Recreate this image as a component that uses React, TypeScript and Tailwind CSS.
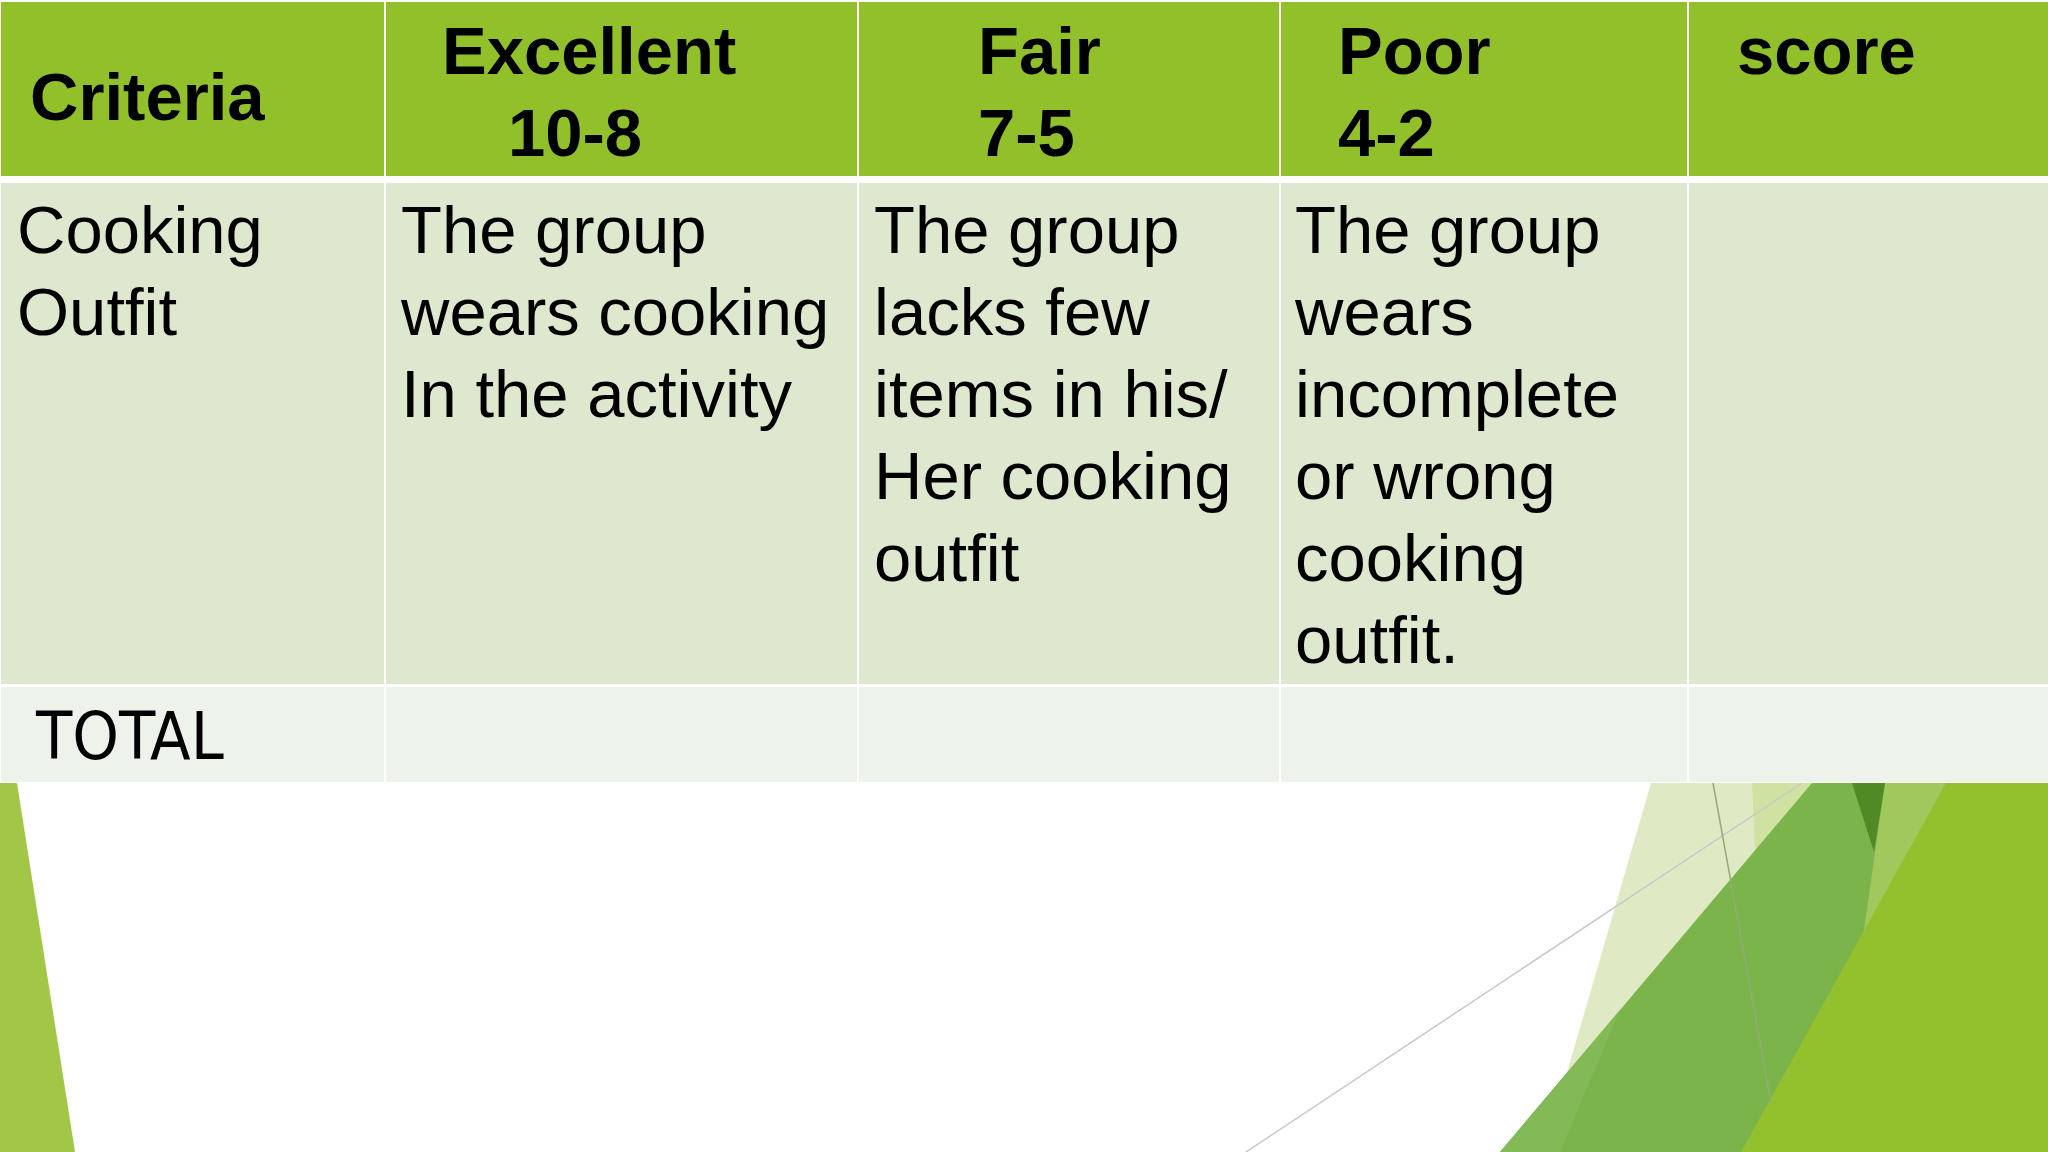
import React from 'react';

const headerCells = [
  { lines: ['Criteria'], className: 'pl-[29px] pt-[54px]' },
  { lines: ['Excellent', '10-8'], className: 'pl-[56px] pt-[8px]', indents: [0, 66] },
  { lines: ['Fair', '7-5'], className: 'pl-[119px] pt-[8px]' },
  { lines: ['Poor', '4-2'], className: 'pl-[57px] pt-[8px]' },
  { lines: ['score'], className: 'pl-[48px] pt-[8px]' },
];

const bodyCells = [
  { lines: ['Cooking', 'Outfit'], className: 'pl-[16px]' },
  { lines: ['The group', 'wears cooking', 'In the activity'], className: 'pl-[15px]' },
  { lines: ['The group', 'lacks few', 'items in his/', 'Her cooking', 'outfit'], className: 'pl-[15px]' },
  { lines: ['The group', 'wears', 'incomplete', 'or wrong', 'cooking', 'outfit.'], className: 'pl-[14px]' },
  { lines: [], className: '' },
];

const cols = 'grid grid-cols-[383px_471px_420px_406px_1fr] gap-x-[2px]';

// decorative theme shapes under the table
const Decoration: React.FC = () => (
  <svg className="absolute inset-0 w-full h-full" viewBox="0 0 2048 1152" preserveAspectRatio="none">
    <polygon points="0,783 17,783 75,1152 0,1152" fill="#a2c747" />
    <polygon points="1651,783 2048,783 2048,1152 1544,1152" fill="#dfeac4" />
    <polygon points="1752,783 1812,783 1768,960 1760,960" fill="#d0e2a2" />
    <line x1="1802" y1="783" x2="1246" y2="1152" stroke="#c9c9c9" strokeWidth="1.5" />
    <polygon points="1812,783 2048,783 2048,1152 1500,1152" fill="#7bb44b" />
    <polygon points="1500,1152 1560,1152 1620,1010" fill="#84b957" />
    <polygon points="1885,783 1946,783 1863,937" fill="#a0c85c" />
    <polygon points="1852,783 1885,783 1874,852" fill="#4f8a24" />
    <polygon points="1946,783 2048,783 2048,1152 1741,1152" fill="#93c12e" />
    <line x1="1713" y1="783" x2="1771" y2="1103" stroke="#94a97a" strokeWidth="1.5" />
  </svg>
);

export default function App() {
  return (
    <div className="relative w-full h-[1152px] bg-white overflow-hidden font-['Liberation_Sans',Arial,sans-serif] text-black">
      <Decoration />
      <div className="relative bg-white pt-[2px] pl-[1px]">
        {/* Header */}
        <div className={`${cols} h-[174px]`}>
          {headerCells.map((c, i) => (
            <div key={i} className={`bg-[#92c02b] font-bold text-[67px] leading-[82px] ${c.className}`}>
              {c.lines.map((l, j) => (
                <div key={j} className={c.indents && c.indents[j] ? 'pl-[66px]' : ''}>
                  {l}
                </div>
              ))}
            </div>
          ))}
        </div>

        {/* Body */}
        <div className={`${cols} h-[501px] mt-[7px]`}>
          {bodyCells.map((c, i) => (
            <div key={i} className={`bg-[#dde8cf] text-[67px] leading-[82px] pt-[6px] ${c.className}`}>
              {c.lines.map((l, j) => (
                <div key={j} className="whitespace-nowrap">{l}</div>
              ))}
            </div>
          ))}
        </div>

        {/* Total */}
        <div className={`${cols} h-[95px] mt-[3px]`}>
          <div className="bg-[#edf2ea] pl-[35px] pt-[9px] text-[66px] leading-[82px] font-['Liberation_Sans_Narrow','DejaVu_Sans_Condensed',sans-serif]">
            TOTAL
          </div>
          <div className="bg-[#edf2ea]" />
          <div className="bg-[#edf2ea]" />
          <div className="bg-[#edf2ea]" />
          <div className="bg-[#edf2ea]" />
        </div>
      </div>
    </div>
  );
}
